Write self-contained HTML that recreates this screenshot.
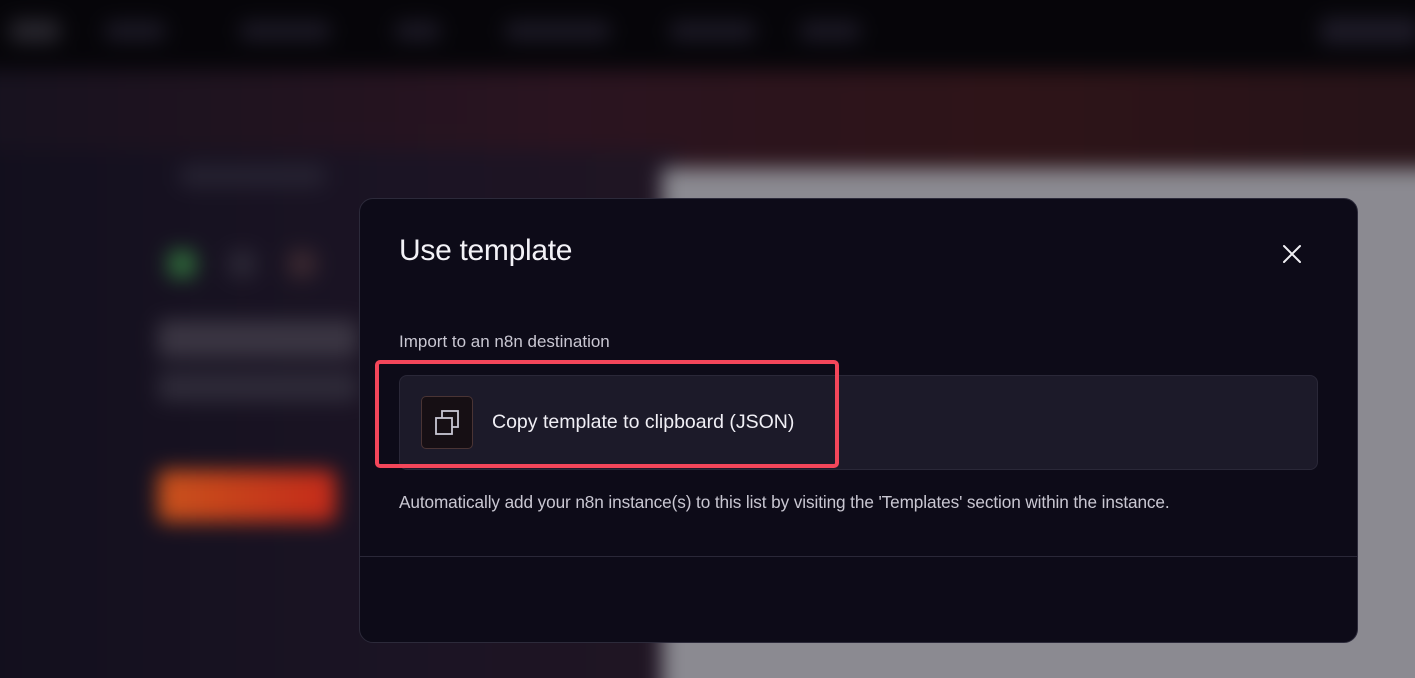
<!DOCTYPE html>
<html><head><meta charset="utf-8"><style>
*{margin:0;padding:0;box-sizing:border-box}
html,body{width:1415px;height:678px;overflow:hidden}
body{background:#14111f;font-family:"Liberation Sans",sans-serif;position:relative}
.bg{position:absolute;inset:0;filter:blur(10px)}
.nav{position:absolute;left:-20px;top:-20px;width:1460px;height:90px;background:#060509}
.hero{position:absolute;left:-20px;top:70px;width:1460px;height:120px;background:linear-gradient(90deg,#17121f 0%,#2a1420 40%,#2e1418 70%,#261318 100%)}
.left{position:absolute;left:-20px;top:150px;width:700px;height:560px;background:linear-gradient(90deg,#120f1d,#1b1424 60%,#201523)}
.grey{position:absolute;left:662px;top:168px;width:800px;height:540px;background:#8b8a91}
.pill{position:absolute;background:#1e1b28;border-radius:6px}
.modal{position:absolute;left:359px;top:198px;width:999px;height:445px;background:#0d0b18;border:1px solid #2c2a3a;border-radius:14px;overflow:hidden}
h1{position:absolute;left:39px;top:35px;font-size:30px;font-weight:400;color:#f3f2f7;letter-spacing:-0.3px}
.x{position:absolute;left:921px;top:44px}
.lbl{position:absolute;left:39px;top:133px;font-size:17px;color:#c9c7d2}
.card{position:absolute;left:39px;top:176px;width:919px;height:95px;background:#1c1a29;border:1px solid #2a2838;border-radius:8px}
.ic{position:absolute;left:21px;top:20px;width:52px;height:53px;background:#160f14;border:1px solid #4a3434;border-radius:5px}
.ct{position:absolute;left:92px;top:35px;font-size:19.5px;color:#f0eff5}
.note{position:absolute;left:39px;top:293px;font-size:17.2px;color:#c9c7d2;letter-spacing:-0.1px}
.hr{position:absolute;left:0;top:357px;width:100%;height:1px;background:#2a2838}
.red{position:absolute;left:375px;top:360px;width:464px;height:108px;border:4px solid #f3465a;border-radius:5px}
</style></head><body>
<div class="bg">
<div class="nav"></div>
<div class="hero"></div>
<div class="left"></div>
<div class="grey"></div>
<div class="pill" style="left:10px;top:20px;width:50px;height:22px;background:#2a2830"></div>
<div class="pill" style="left:105px;top:22px;width:60px;height:18px"></div>
<div class="pill" style="left:240px;top:22px;width:90px;height:18px"></div>
<div class="pill" style="left:395px;top:22px;width:45px;height:18px"></div>
<div class="pill" style="left:505px;top:22px;width:105px;height:18px"></div>
<div class="pill" style="left:670px;top:22px;width:85px;height:18px"></div>
<div class="pill" style="left:800px;top:22px;width:60px;height:18px"></div>
<div class="pill" style="left:1320px;top:18px;width:100px;height:26px"></div>
<div class="pill" style="left:180px;top:165px;width:145px;height:22px;background:#262231"></div>
<div class="pill" style="left:168px;top:250px;width:28px;height:28px;background:#2f6a3a;border-radius:8px"></div>
<div class="pill" style="left:228px;top:250px;width:28px;height:28px;background:#2a2634"></div>
<div class="pill" style="left:288px;top:250px;width:28px;height:28px;background:#3a2830"></div>
<div class="pill" style="left:158px;top:320px;width:200px;height:38px;background:#3a3542"></div>
<div class="pill" style="left:158px;top:372px;width:200px;height:30px;background:#2e2a38"></div>
<div class="pill" style="left:158px;top:470px;width:178px;height:52px;background:linear-gradient(90deg,#c8521c,#c42a1a);border-radius:8px"></div>
</div>
<div class="modal">
<h1>Use template</h1>
<svg class="x" width="22" height="22" viewBox="0 0 22 22"><path d="M3 3L19 19M19 3L3 19" stroke="#f0f0f4" stroke-width="2" stroke-linecap="round"/></svg>
<div class="lbl">Import to an n8n destination</div>
<div class="card">
<div class="ic"><svg width="52" height="53" viewBox="0 0 52 53"><rect x="20" y="14" width="16" height="16" fill="none" stroke="#c8c6d4" stroke-width="1.8"/><rect x="14" y="21" width="16" height="16" fill="#160f14" stroke="#c8c6d4" stroke-width="1.8"/></svg></div>
<div class="ct">Copy template to clipboard (JSON)</div>
</div>
<div class="note">Automatically add your n8n instance(s) to this list by visiting the 'Templates' section within the instance.</div>
<div class="hr"></div>
</div>
<div class="red"></div>
</body></html>
